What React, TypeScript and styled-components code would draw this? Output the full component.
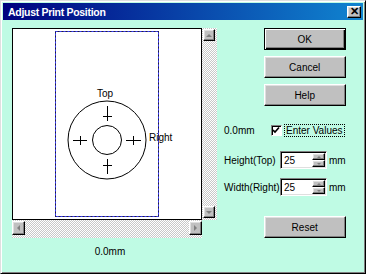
import React from "react";
import styled, { createGlobalStyle, css } from "styled-components";

const Global = createGlobalStyle`
  html, body { margin: 0; padding: 0; background: #c0c0c0; }
  body { font-family: "Liberation Sans", Arial, sans-serif; font-size: 10px; color: #000; }
  * { box-sizing: border-box; }
`;

const Window = styled.div`
  width: 366px;
  height: 274px;
  display: flex;
  flex-direction: column;
  background: #bffbe4;
  border-top: 1px solid #dfdfdf;
  border-left: 1px solid #dfdfdf;
  border-right: 1px solid #000;
  border-bottom: 1px solid #000;
  box-shadow: inset 1px 1px 0 #fff, inset -1px -1px 0 #808080;
  padding: 2px 2px 2px 2px;
`;

const TitleBar = styled.div`
  height: 17px;
  flex: none;
  display: flex;
  align-items: center;
  justify-content: space-between;
  padding: 0 2px 0 5px;
  background: linear-gradient(90deg, #000080 0%, #0a50b0 60%, #1084d0 100%);
`;

const Title = styled.span`
  color: #fff;
  font-weight: bold;
  font-size: 10.5px;
  letter-spacing: -0.3px;
`;

const bevelOut = css`
  background: #c0c0c0;
  border-top: 1px solid #fff;
  border-left: 1px solid #fff;
  border-right: 1px solid #000;
  border-bottom: 1px solid #000;
  box-shadow: inset -1px -1px 0 #808080, inset 1px 1px 0 #dfdfdf;
`;

const CloseButton = styled.div`
  ${bevelOut};
  width: 14px;
  height: 12px;
  display: flex;
  align-items: center;
  justify-content: center;
  font-size: 11px;
  font-weight: bold;
  line-height: 1;
`;

const Body = styled.div`
  flex: 1;
  display: grid;
  grid-template-columns: 212px 1fr;
  padding: 8px 20px 0 9px;
`;

const PreviewColumn = styled.div`
  display: flex;
  flex-direction: column;
  align-items: flex-start;
`;

const ScrollFrame = styled.div`
  display: grid;
  grid-template-columns: 190px 15px;
  grid-template-rows: 192px 18px;
`;

const Canvas = styled.div`
  background: #fff;
  border: 1px solid #000;
  display: flex;
`;

const track = css`
  background-color: #fff;
  background-image: conic-gradient(#c8c8c8 25%, transparent 0 50%, #c8c8c8 0 75%, transparent 0);
  background-size: 2px 2px;
`;

const VScroll = styled.div`
  ${track};
  display: flex;
  flex-direction: column;
  justify-content: space-between;
  padding: 1px 2px 2px 1px;
`;

const HScroll = styled.div`
  ${track};
  display: flex;
  justify-content: space-between;
  padding: 1px 0 3px 0;
`;

const ArrowButton = styled.div<{ $w: number; $h: number }>`
  ${bevelOut};
  width: ${(p) => p.$w}px;
  height: ${(p) => p.$h}px;
  display: flex;
  align-items: center;
  justify-content: center;
`;

const Arrow = styled.div<{ $dir: "up" | "down" | "left" | "right"; $size?: number }>`
  width: 0;
  height: 0;
  ${(p) => {
    const s = p.$size ?? 3;
    switch (p.$dir) {
      case "up":
        return `border-left:${s}px solid transparent;border-right:${s}px solid transparent;border-bottom:${s}px solid #808080;`;
      case "down":
        return `border-left:${s}px solid transparent;border-right:${s}px solid transparent;border-top:${s}px solid #808080;`;
      case "left":
        return `border-top:${s}px solid transparent;border-bottom:${s}px solid transparent;border-right:${s}px solid #808080;`;
      default:
        return `border-top:${s}px solid transparent;border-bottom:${s}px solid transparent;border-left:${s}px solid #808080;`;
    }
  }}
`;

const Caption = styled.div`
  align-self: stretch;
  width: 190px;
  text-align: center;
  margin-top: 8px;
  padding-left: 6px;
`;

const SideColumn = styled.div`
  display: flex;
  flex-direction: column;
`;

const PushButton = styled.button<{ $default?: boolean }>`
  ${bevelOut};
  align-self: flex-end;
  width: 82px;
  height: 22px;
  font-family: inherit;
  font-size: 10px;
  color: #000;
  padding: 0;
  margin-bottom: 6px;
  ${(p) =>
    p.$default &&
    css`
      border: 1px solid #000;
      box-shadow: inset 1px 1px 0 #fff, inset -1px -1px 0 #000, inset -2px -2px 0 #808080;
    `}
`;

const ValueRow = styled.div`
  display: flex;
  align-items: center;
  margin-top: 11px;
  height: 14px;
  white-space: nowrap;
`;

const ValueText = styled.span`
  width: 47px;
  flex: none;
`;

const CheckBox = styled.div`
  width: 11px;
  height: 11px;
  flex: none;
  background: #fff;
  border-top: 1px solid #808080;
  border-left: 1px solid #808080;
  border-right: 1px solid #fff;
  border-bottom: 1px solid #fff;
  box-shadow: inset 1px 1px 0 #000;
  display: flex;
  align-items: center;
  justify-content: center;
`;

const CheckLabel = styled.span`
  flex: none;
  margin-left: 2px;
  padding: 0 1px;
  border: 1px dotted #000;
  line-height: 11px;
  white-space: nowrap;
`;

const FieldRow = styled.div<{ $top: number }>`
  display: flex;
  align-items: center;
  margin-top: ${(p) => p.$top}px;
  height: 18px;
  white-space: nowrap;
`;

const FieldLabel = styled.span`
  width: 56px;
  flex: none;
`;

const SpinBox = styled.div`
  width: 47px;
  height: 18px;
  flex: none;
  display: flex;
  background: #fff;
  border-top: 1px solid #808080;
  border-left: 1px solid #808080;
  border-right: 1px solid #fff;
  border-bottom: 1px solid #fff;
  box-shadow: inset 1px 1px 0 #000, inset -1px -1px 0 #dfdfdf;
  padding: 1px;
`;

const SpinValue = styled.span`
  flex: 1;
  padding-left: 2px;
  display: flex;
  align-items: center;
`;

const SpinButtons = styled.div`
  width: 13px;
  display: flex;
  flex-direction: column;
`;

const SpinButton = styled.div`
  ${bevelOut};
  flex: 1;
  display: flex;
  align-items: center;
  justify-content: center;
`;

const Unit = styled.span`
  margin-left: 2px;
`;

const ResetButton = styled(PushButton)`
  margin-top: 20px;
`;

function PreviewDrawing() {
  const cross = (cx: number, cy: number, hw: number, vh: number, barY: number) => (
    <g stroke="#000" strokeWidth={1}>
      <line x1={cx} y1={cy - vh} x2={cx} y2={cy + vh} />
      <line x1={cx - hw} y1={barY} x2={cx + hw} y2={barY} />
    </g>
  );
  return (
    <svg width="188" height="190" viewBox="0 0 188 190">
      <rect x="42.5" y="2.5" width="103" height="185" fill="none" stroke="#202040" strokeWidth="1" />
      <rect x="42.5" y="2.5" width="103" height="185" fill="none" stroke="#3c3cff" strokeWidth="1" strokeDasharray="2 2" />
      <circle cx="94" cy="111" r="39" fill="none" stroke="#000" />
      <circle cx="94" cy="111" r="14.5" fill="none" stroke="#000" />
      {cross(94.5, 84.5, 4.5, 7.5, 87.5)}
      {cross(94.5, 137.5, 4.5, 7.5, 136.5)}
      <g stroke="#000">
        <line x1="60" y1="111.5" x2="74" y2="111.5" />
        <line x1="67.5" y1="107" x2="67.5" y2="116" />
        <line x1="113" y1="111.5" x2="128" y2="111.5" />
        <line x1="120.5" y1="107" x2="120.5" y2="116" />
      </g>
      <text x="92" y="68" textAnchor="middle" fontFamily="Liberation Sans, Arial, sans-serif" fontSize="10">Top</text>
      <text x="136" y="112" fontFamily="Liberation Sans, Arial, sans-serif" fontSize="10">Right</text>
    </svg>
  );
}

function Spinner({ value }: { value: string }) {
  return (
    <SpinBox>
      <SpinValue>{value}</SpinValue>
      <SpinButtons>
        <SpinButton>
          <Arrow $dir="up" $size={2} />
        </SpinButton>
        <SpinButton>
          <Arrow $dir="down" $size={2} />
        </SpinButton>
      </SpinButtons>
    </SpinBox>
  );
}

export default function App() {
  return (
    <>
      <Global />
      <Window>
        <TitleBar>
          <Title>Adjust Print Position</Title>
          <CloseButton>✕</CloseButton>
        </TitleBar>
        <Body>
          <PreviewColumn>
            <ScrollFrame>
              <Canvas>
                <PreviewDrawing />
              </Canvas>
              <VScroll>
                <ArrowButton $w={12} $h={12}>
                  <Arrow $dir="up" />
                </ArrowButton>
                <ArrowButton $w={12} $h={12}>
                  <Arrow $dir="down" />
                </ArrowButton>
              </VScroll>
              <HScroll>
                <ArrowButton $w={13} $h={14}>
                  <Arrow $dir="left" />
                </ArrowButton>
                <ArrowButton $w={13} $h={14}>
                  <Arrow $dir="right" />
                </ArrowButton>
              </HScroll>
            </ScrollFrame>
            <Caption>0.0mm</Caption>
          </PreviewColumn>
          <SideColumn>
            <PushButton $default>OK</PushButton>
            <PushButton>Cancel</PushButton>
            <PushButton>Help</PushButton>
            <ValueRow>
              <ValueText>0.0mm</ValueText>
              <CheckBox>
                <svg width="7" height="7" viewBox="0 0 7 7">
                  <path d="M0 3 L2 5 L6 0.5" fill="none" stroke="#000" strokeWidth="1.6" />
                </svg>
              </CheckBox>
              <CheckLabel>Enter Values</CheckLabel>
            </ValueRow>
            <FieldRow $top={14}>
              <FieldLabel>Height(Top)</FieldLabel>
              <Spinner value="25" />
              <Unit>mm</Unit>
            </FieldRow>
            <FieldRow $top={9}>
              <FieldLabel>Width(Right)</FieldLabel>
              <Spinner value="25" />
              <Unit>mm</Unit>
            </FieldRow>
            <ResetButton>Reset</ResetButton>
          </SideColumn>
        </Body>
      </Window>
    </>
  );
}
